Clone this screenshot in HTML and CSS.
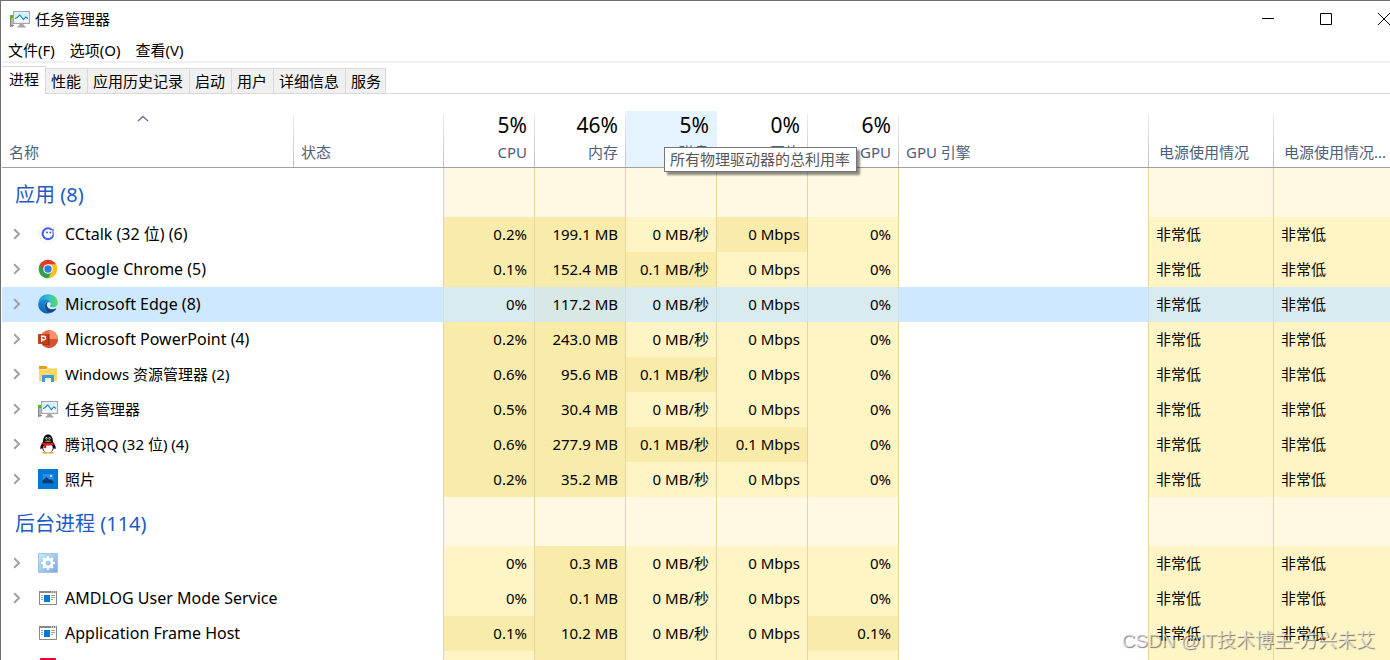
FILE: index.html
```html
<!DOCTYPE html>
<html lang="zh-CN">
<head>
<meta charset="utf-8">
<title>任务管理器</title>
<link rel="stylesheet" href="styles.css">
</head>
<body>
<svg class="defs" aria-hidden="true">
  <defs>
    <linearGradient id="edge-a" x1="0" y1="0" x2="1" y2="0"><stop offset="0" stop-color="#1f9ad8"/><stop offset=".55" stop-color="#35c1c8"/><stop offset="1" stop-color="#5fdc54"/></linearGradient>
    <linearGradient id="edge-b" x1="0" y1="0" x2="0" y2="1"><stop offset="0" stop-color="#1b8fdc"/><stop offset="1" stop-color="#0f5fb5"/></linearGradient>
    <linearGradient id="gear-bg" x1="0" y1="0" x2="1" y2="1"><stop offset="0" stop-color="#c2ecfa"/><stop offset="1" stop-color="#7ea6e2"/></linearGradient>
    <symbol id="i-task" viewBox="0 0 20 20">
      <rect x="0" y="6" width="3" height="12" fill="#b4b4b4"/><rect x="0" y="6" width="3" height="3" fill="#3fc31c"/><path d="M.5 9v9M1 16.500h3" stroke="#858585"/>
      <rect x="3.600" y="2.600" width="15.800" height="11.800" fill="#fff" stroke="#a2a7a9" stroke-width="1.200"/>
      <rect x="5" y="4" width="13" height="9" fill="#d3f0fb"/>
      <path d="M5 10l2-1.300L9.800 6l3.600 4.600L15.800 8 18 9v4H5z" fill="#eefaff"/>
      <path d="M5 9.500l1.800-.800L9.800 6l3.600 4.600L15.800 8 18 9.500" fill="none" stroke="#1a84c2" stroke-width="1.100"/>
      <path d="M9.500 15h4v1l3 2.500H6.800L9.500 16z" fill="#a5a5a5"/>
    </symbol>
    <symbol id="i-cc" viewBox="0 0 20 20">
      <circle cx="10" cy="10" r="9" fill="#fff" stroke="#ececf4" stroke-width=".7"/>
      <path d="M13.800 5.900A5.400 5.400 0 1 0 15.200 11.200" fill="none" stroke="#3b5ff4" stroke-width="2"/>
      <path d="M13.500 5.200L15.800 4.500 15.600 7.500 16 11h-1.500L14.300 7z" fill="#5c7cf6"/><circle cx="9" cy="8.500" r="1" fill="#3b5ff4"/><circle cx="12.300" cy="8.500" r="1" fill="#3b5ff4"/>
    </symbol>
    <symbol id="i-chrome" viewBox="0 0 20 20">
      <circle cx="10" cy="10" r="9.300" fill="#fbc116"/>
      <path d="M10 10L1.950 5.350A9.300 9.300 0 0 1 18.050 5.350H10z" fill="#e33b2e"/>
      <path d="M10 10L1.950 5.350A9.300 9.300 0 0 0 10 19.300L14 12.300z" fill="#2ba24c"/>
      <path d="M1.950 5.350L6 12.300 10 10V5.350z" fill="#e33b2e"/>
      <path d="M6 12.300A4.650 4.650 0 0 0 14 12.300L10 19.300z" fill="#2ba24c"/>
      <circle cx="10" cy="10" r="4.800" fill="#fff"/><circle cx="10" cy="10" r="3.700" fill="#2f7de1"/>
    </symbol>
    <symbol id="i-edge" viewBox="0 0 20 20">
      <path d="M.3 9C1 3.500 5 .2 10 .2c5.800 0 9.800 4 9.800 8.300 0 3.200-2.300 5-5 5-2.300 0-3.300-.8-3.100-1.400.3-.6.900-1.100.9-2.400C12.600 7.300 10 5.500 7 5.500 3.800 5.500 1.300 7 .3 9z" fill="url(#edge-a)"/>
      <path d="M.2 10C.7 7 3.500 5.300 6.700 5.300c3.500 0 5.700 2 5.900 4.200-.4-.8-1.300-1.300-2.500-1.300-2 0-3.600 1.700-3.600 4.200 0 3.500 3 6.300 6.500 6.200-1 .7-2.200 1-3.200 1C4.500 19.600-.3 15.500.2 10z" fill="url(#edge-b)"/>
      <path d="M10.100 8.200c-2 0-3.600 1.700-3.600 4.200 0 4 3.300 6.900 7 6.300 1.700-.5 3.500-1.800 4.700-3.600.3-.5-.1-.8-.5-.6-3.700 1.600-8.100.8-8.900-3.300 0-1.200.500-2.300 1.300-3z" fill="#114b8c"/>
      <path d="M9 11c.2-1 .7-1.800 1.800-2.400 1 .1 1.700.6 1.800 1.300 0 1.100-.9 1.600-.9 2.300 0 .8 1.100 1.400 3.100 1.300 1 0 2-.3 2.900-.8-1 1.500-2.500 2-4 1.900C11.500 14.500 9.300 13.500 9 11z" fill="#dcefff"/>
    </symbol>
    <symbol id="i-ppt" viewBox="0 0 20 20">
      <circle cx="11" cy="10" r="9" fill="#ed6c47"/><path d="M11 1a9 9 0 0 1 9 9h-9z" fill="#ff8f6b"/><path d="M2 10h18a9 9 0 0 1-18 0z" fill="#d35230"/>
      <path d="M5 5h6.500v11H5z" fill="#9d3218"/>
      <rect y="5" width="10" height="10" rx="1" fill="#c43e1c"/>
      <path d="M3.700 13V7.200h2.100a1.700 1.700 0 0 1 0 3.500H3.700" fill="none" stroke="#fff" stroke-width="1.400"/>
    </symbol>
    <symbol id="i-folder" viewBox="0 0 20 20">
      <path d="M1 2h7l2 2h9v13H1z" fill="#ffd766"/><path d="M1 2h7l1.500 1.500L8 5H1z" fill="#e69f15"/><path d="M1 5h7l1.500-1H19v1H9L8 6H1z" fill="#ffe48d"/>
      <path d="M4 18v-7h12v7h-3v-4H7v4z" fill="#3d9be4"/><path d="M7 14h6v3H7z" fill="#fff0bd"/>
    </symbol>
    <symbol id="i-qq" viewBox="0 0 20 20">
      <path d="M5 8C5 3 7 .5 10 .5S15 3 15 8c1.500 2 3 4.500 2.800 6.500-.5 1-1.300.2-1.800-.8-.6 3-2.600 4.800-6 4.800s-5.400-1.800-6-4.800c-.5 1-1.300 1.800-1.800.8C2 12.500 3.500 10 5 8z" fill="#0c0c12"/>
      <ellipse cx="10" cy="14" rx="4.800" ry="4.500" fill="#fff"/>
      <ellipse cx="8.500" cy="4.300" rx="1" ry="1.400" fill="#ddd"/><ellipse cx="11.500" cy="4.300" rx="1" ry="1.400" fill="#ddd"/><circle cx="8.800" cy="4.500" r=".5"/><circle cx="11.300" cy="4.500" r=".5"/>
      <path d="M6.500 7c2-.7 5-.7 7 0-1.500 1.200-5.500 1.200-7 0z" fill="#d9a018"/>
      <path d="M4 8.300c3.500 1.500 8.500 1.500 12 0l.4 2c-2.500 1.300-5.500 1.600-8 1.300l-.3 2.700-2.500-.5.400-3-2.400-.9z" fill="#e21b20"/>
      <ellipse cx="7" cy="18.700" rx="2.800" ry="1" fill="#e8ab3c"/><ellipse cx="13" cy="18.700" rx="2.800" ry="1" fill="#e8ab3c"/>
    </symbol>
    <symbol id="i-photo" viewBox="0 0 20 20">
      <path d="M0 0h20v20H0z" fill="#0078d7"/><path d="M5 5h10.500v9.500H5z" fill="#2a90de"/><circle cx="13" cy="7" r="1.100" fill="#d8efff"/>
      <path d="M4.500 14.500v-2.800L8.500 8l3.300 3 1.200-1 2.500 2.500v2z" fill="#0b3c75"/>
    </symbol>
    <symbol id="i-gear" viewBox="0 0 20 20">
      <path d="M.5.500h19v19H.5z" fill="url(#gear-bg)" stroke="#a9c5dc"/>
      <circle cx="10" cy="10" r="4" fill="none" stroke="#fff" stroke-width="2.800"/>
      <path d="M10 3v2.500M10 14.500V17M3 10h2.500M14.500 10H17M5.050 5.050l1.800 1.800M13.150 13.150l1.800 1.800M5.050 14.950l1.800-1.800M13.150 6.850l1.800-1.800" stroke="#fff" stroke-width="2.200"/>
    </symbol>
    <symbol id="i-app" viewBox="0 0 20 20">
      <path d="M1.500 3.500h17v13h-17z" fill="#fff" stroke="#85898c"/><path d="M1 3h18v2H1z" fill="#85898c"/><path d="M13 4h1M15 4h1M17 4h1" stroke="#fff"/>
      <path d="M6 7h6v7H6z" fill="#0078d7"/><path d="M3 7.500h2M3 9.500h2M3 11.500h2M13 7.500h4M13 9.500h4M13 11.500h2" stroke="#a0a4a6"/>
    </symbol>
    <symbol id="i-chev" viewBox="0 0 8 12"><path d="M1.200 1.200L6 6l-4.800 4.800" fill="none" stroke="#a0a0a0" stroke-width="2"/></symbol>
  </defs>
</svg>
<div class="window">
  <header class="titlebar">
    <svg class="icon"><use href="#i-task"/></svg>
    <h1 class="title">任务管理器</h1>
    <div class="controls">
      <button class="control" aria-label="最小化"><svg width="12" height="12"><path d="M0 5.500h12" stroke="#000"/></svg></button>
      <button class="control" aria-label="最大化"><svg width="12" height="12"><path d="M.5.500h11v11H.5z" fill="none" stroke="#000"/></svg></button>
      <button class="control" aria-label="关闭"><svg width="12" height="12"><path d="M0 0l12 12M12 0L0 12" stroke="#000"/></svg></button>
    </div>
  </header>
  <nav class="menu">
    <button class="menu-item">文件(F)</button><button class="menu-item">选项(O)</button><button class="menu-item">查看(V)</button>
  </nav>
  <div class="tabs" role="tablist">
    <button class="tab active" role="tab" aria-selected="true">进程</button>
    <button class="tab" role="tab">性能</button>
    <button class="tab" role="tab">应用历史记录</button>
    <button class="tab" role="tab">启动</button>
    <button class="tab" role="tab">用户</button>
    <button class="tab" role="tab">详细信息</button>
    <button class="tab" role="tab">服务</button>
  </div>
  <table class="processes">
    <colgroup><col class="c-name"><col class="c-status"><col class="c-metric"><col class="c-metric"><col class="c-metric"><col class="c-metric"><col class="c-metric"><col class="c-engine"><col class="c-power"><col></colgroup>
    <thead>
      <tr>
        <th class="text"><svg class="sort" viewBox="0 0 12 7"><path d="M1 6l5-4.500L11 6" fill="none" stroke="#66739a" stroke-width="1.400"/></svg>名称</th>
        <th class="text">状态</th>
        <th class="num"><strong class="total">5%</strong>CPU</th>
        <th class="num"><strong class="total">46%</strong>内存</th>
        <th class="num hover"><strong class="total">5%</strong>磁盘<span class="tooltip" role="tooltip">所有物理驱动器的总利用率</span></th>
        <th class="num"><strong class="total">0%</strong>网络</th>
        <th class="num"><strong class="total">6%</strong>GPU</th>
        <th class="text">GPU 引擎</th>
        <th class="text power">电源使用情况</th>
        <th class="text power">电源使用情况...</th>
      </tr>
    </thead>
    <tbody>
      <tr class="group"><th colspan="2" scope="rowgroup">应用 (8)</th><td class="heat"></td><td class="heat"></td><td class="heat"></td><td class="heat"></td><td class="heat"></td><td></td><td class="heat"></td><td class="heat"></td></tr>
      <tr><td colspan="2"><div class="name latin"><button class="expand" aria-label="展开"><svg><use href="#i-chev"/></svg></button><svg class="icon"><use href="#i-cc"/></svg>CCtalk (32 位) (6)</div></td><td class="heat high">0.2%</td><td class="heat high">199.1 MB</td><td class="heat">0 MB/秒</td><td class="heat high">0 Mbps</td><td class="heat">0%</td><td></td><td class="heat level">非常低</td><td class="heat level">非常低</td></tr>
      <tr><td colspan="2"><div class="name latin"><button class="expand" aria-label="展开"><svg><use href="#i-chev"/></svg></button><svg class="icon"><use href="#i-chrome"/></svg>Google Chrome (5)</div></td><td class="heat high">0.1%</td><td class="heat high">152.4 MB</td><td class="heat high">0.1 MB/秒</td><td class="heat">0 Mbps</td><td class="heat">0%</td><td></td><td class="heat level">非常低</td><td class="heat level">非常低</td></tr>
      <tr class="selected"><td colspan="2"><div class="name latin"><button class="expand" aria-label="展开"><svg><use href="#i-chev"/></svg></button><svg class="icon"><use href="#i-edge"/></svg>Microsoft Edge (8)</div></td><td class="heat">0%</td><td class="heat high">117.2 MB</td><td class="heat">0 MB/秒</td><td class="heat">0 Mbps</td><td class="heat">0%</td><td></td><td class="heat level">非常低</td><td class="heat level">非常低</td></tr>
      <tr><td colspan="2"><div class="name latin"><button class="expand" aria-label="展开"><svg><use href="#i-chev"/></svg></button><svg class="icon"><use href="#i-ppt"/></svg>Microsoft PowerPoint (4)</div></td><td class="heat high">0.2%</td><td class="heat high">243.0 MB</td><td class="heat">0 MB/秒</td><td class="heat">0 Mbps</td><td class="heat">0%</td><td></td><td class="heat level">非常低</td><td class="heat level">非常低</td></tr>
      <tr><td colspan="2"><div class="name"><button class="expand" aria-label="展开"><svg><use href="#i-chev"/></svg></button><svg class="icon"><use href="#i-folder"/></svg>Windows 资源管理器 (2)</div></td><td class="heat high">0.6%</td><td class="heat high">95.6 MB</td><td class="heat high">0.1 MB/秒</td><td class="heat">0 Mbps</td><td class="heat">0%</td><td></td><td class="heat level">非常低</td><td class="heat level">非常低</td></tr>
      <tr><td colspan="2"><div class="name"><button class="expand" aria-label="展开"><svg><use href="#i-chev"/></svg></button><svg class="icon"><use href="#i-task"/></svg>任务管理器</div></td><td class="heat high">0.5%</td><td class="heat high">30.4 MB</td><td class="heat">0 MB/秒</td><td class="heat">0 Mbps</td><td class="heat">0%</td><td></td><td class="heat level">非常低</td><td class="heat level">非常低</td></tr>
      <tr><td colspan="2"><div class="name"><button class="expand" aria-label="展开"><svg><use href="#i-chev"/></svg></button><svg class="icon"><use href="#i-qq"/></svg>腾讯QQ (32 位) (4)</div></td><td class="heat high">0.6%</td><td class="heat high">277.9 MB</td><td class="heat high">0.1 MB/秒</td><td class="heat high">0.1 Mbps</td><td class="heat">0%</td><td></td><td class="heat level">非常低</td><td class="heat level">非常低</td></tr>
      <tr><td colspan="2"><div class="name"><button class="expand" aria-label="展开"><svg><use href="#i-chev"/></svg></button><svg class="icon"><use href="#i-photo"/></svg>照片</div></td><td class="heat high">0.2%</td><td class="heat high">35.2 MB</td><td class="heat">0 MB/秒</td><td class="heat">0 Mbps</td><td class="heat">0%</td><td></td><td class="heat level">非常低</td><td class="heat level">非常低</td></tr>
    </tbody>
    <tbody>
      <tr class="group"><th colspan="2" scope="rowgroup">后台进程 (114)</th><td class="heat"></td><td class="heat"></td><td class="heat"></td><td class="heat"></td><td class="heat"></td><td></td><td class="heat"></td><td class="heat"></td></tr>
      <tr><td colspan="2"><div class="name"><button class="expand" aria-label="展开"><svg><use href="#i-chev"/></svg></button><svg class="icon"><use href="#i-gear"/></svg></div></td><td class="heat">0%</td><td class="heat high">0.3 MB</td><td class="heat">0 MB/秒</td><td class="heat">0 Mbps</td><td class="heat">0%</td><td></td><td class="heat level">非常低</td><td class="heat level">非常低</td></tr>
      <tr><td colspan="2"><div class="name latin"><button class="expand" aria-label="展开"><svg><use href="#i-chev"/></svg></button><svg class="icon"><use href="#i-app"/></svg>AMDLOG User Mode Service</div></td><td class="heat">0%</td><td class="heat high">0.1 MB</td><td class="heat">0 MB/秒</td><td class="heat">0 Mbps</td><td class="heat">0%</td><td></td><td class="heat level">非常低</td><td class="heat level">非常低</td></tr>
      <tr><td colspan="2"><div class="name latin leaf"><svg class="icon"><use href="#i-app"/></svg>Application Frame Host</div></td><td class="heat high">0.1%</td><td class="heat high">10.2 MB</td><td class="heat">0 MB/秒</td><td class="heat">0 Mbps</td><td class="heat high">0.1%</td><td></td><td class="heat level">非常低</td><td class="heat level">非常低</td></tr>
      <tr><td colspan="2"><div class="name leaf"><svg class="icon" viewBox="0 0 20 20"><rect x="2" width="16" height="20" rx="1" fill="#e2062c"/></svg></div></td><td class="heat"></td><td class="heat high"></td><td class="heat"></td><td class="heat"></td><td class="heat"></td><td></td><td class="heat"></td><td class="heat"></td></tr>
    </tbody>
  </table>
  <div class="watermark">CSDN @IT技术博主-方兴未艾</div>
</div>
</body>
</html>
```
FILE: styles.css
```css
* { box-sizing: border-box; }
html, body { height: 100%; }
body {
  margin: 0;
  overflow: hidden;
  background: #fff;
  color: #000;
  font-family: "Noto Sans", "Noto Sans CJK SC", sans-serif;
  font-size: 15px;
  line-height: 20px;
}
button {
  margin: 0;
  padding: 0;
  border: 0;
  background: none;
  color: inherit;
  font: inherit;
}
.defs { position: absolute; width: 0; height: 0; }
.icon { width: 20px; height: 20px; flex: none; }
.window {
  position: relative;
  height: 100%;
  overflow: hidden;
  padding-left: 1px;
  border-top: 1px solid #6e6e6e;
  border-left: 1px solid #6e6e6e;
}
.titlebar { display: flex; align-items: center; height: 36px; padding-left: 8px; }
.title { margin: 0 0 0 5px; font-size: 15px; font-weight: 400; }
.controls { display: flex; margin-left: auto; margin-right: -23px; }
.control { display: flex; align-items: center; justify-content: center; width: 58px; height: 36px; }
.menu {
  display: flex;
  align-items: flex-start;
  gap: 15px;
  height: 26px;
  padding: 3px 0 0 6px;
  border-bottom: 2px solid #f0f0f0;
}
.tabs { display: flex; align-items: flex-end; height: 31px; border-bottom: 1px solid #d9d9d9; }
.tab {
  height: 25px;
  padding: 0 6px 0 5px;
  border: 1px solid #d9d9d9;
  border-width: 1px 1px 0 0;
  background: #f0f0f0;
}
.tab:last-child { padding-right: 4px; }
.tab.active { height: 28px; margin-bottom: -1px; padding: 0 6px 3px 7px; background: #fff; }

.processes { width: 100%; border-collapse: separate; border-spacing: 0; table-layout: fixed; }
.c-name { width: 292px; }
.c-status { width: 150px; }
.c-metric { width: 91px; }
.c-engine { width: 250px; }
.c-power { width: 125px; }

thead th {
  position: relative;
  height: 74px;
  padding: 16px 8px 5px 7px;
  border-bottom: 1px solid #a0a0a0;
  background: linear-gradient(#ececec, #c0c0c0) right bottom / 1px 53px no-repeat;
  color: #4c607a;
  font-weight: 400;
  text-align: left;
  vertical-align: bottom;
  white-space: nowrap;
}
thead th:last-child { background: none; }
thead .num { text-align: right; }
thead .power { padding-left: 10px; padding-right: 0; }
thead .hover { background: linear-gradient(#e5f3ff, #e5f3ff) left bottom / 100% 56px no-repeat; }
.total { display: block; margin-bottom: 5px; color: #000; font-size: 21px; font-weight: 400; line-height: 24px; }
.sort { position: absolute; top: 21px; left: 50%; width: 12px; height: 7px; margin-left: -11px; }
.tooltip {
  position: absolute;
  z-index: 2;
  top: 53px;
  left: 38px;
  height: 25px;
  padding: 1px 6px 1px 5px;
  border: 1px solid #767676;
  background: #fff;
  box-shadow: 3px 3px 2px rgba(0, 0, 0, .45);
  color: #575757;
}

tbody td { height: 35px; padding: 0 0 2px; white-space: nowrap; }
.heat {
  padding-right: 7px;
  border-right: 1px solid #e8d49c;
  background: #fff4c4;
  text-align: right;
}
.heat.high { background: #f9ecaa; }
.heat.level { padding-left: 7px; text-align: left; }
.heat:last-child { border-right: 0; }
tbody td:first-child, tbody .group th, tbody td:nth-last-child(3) { border-right: 1px solid #e8d49c; }
.group th { height: 49px; padding: 5px 0 0 13px; color: #1e5bc6; font-size: 20px; font-weight: 400; line-height: 26px; text-align: left; }
.group .heat { background: #fff9e3; }
.selected td { background: #cde8ff; }
.selected .heat, .selected td:first-child, .selected td:nth-last-child(3) { border-right-color: #d3e0e2; }
.selected .heat { background: #daebf0; }
.selected .heat.high { background: #d7e8e7; }
.name { display: flex; align-items: center; gap: 7px; padding-left: 11px; }
.latin { font-size: 16px; }
.leaf { padding-left: 36px; }
.expand { display: flex; width: 18px; height: 20px; align-items: center; }
.expand svg { width: 8px; height: 12px; }

.watermark {
  position: absolute;
  right: 15px;
  bottom: 5px;
  color: rgba(255, 255, 255, .6);
  font-family: "Liberation Sans", "Noto Sans CJK SC", sans-serif;
  font-size: 19px;
  line-height: 28px;
  text-shadow: 1px 1px 1px rgba(0, 0, 0, .5);
}
```
